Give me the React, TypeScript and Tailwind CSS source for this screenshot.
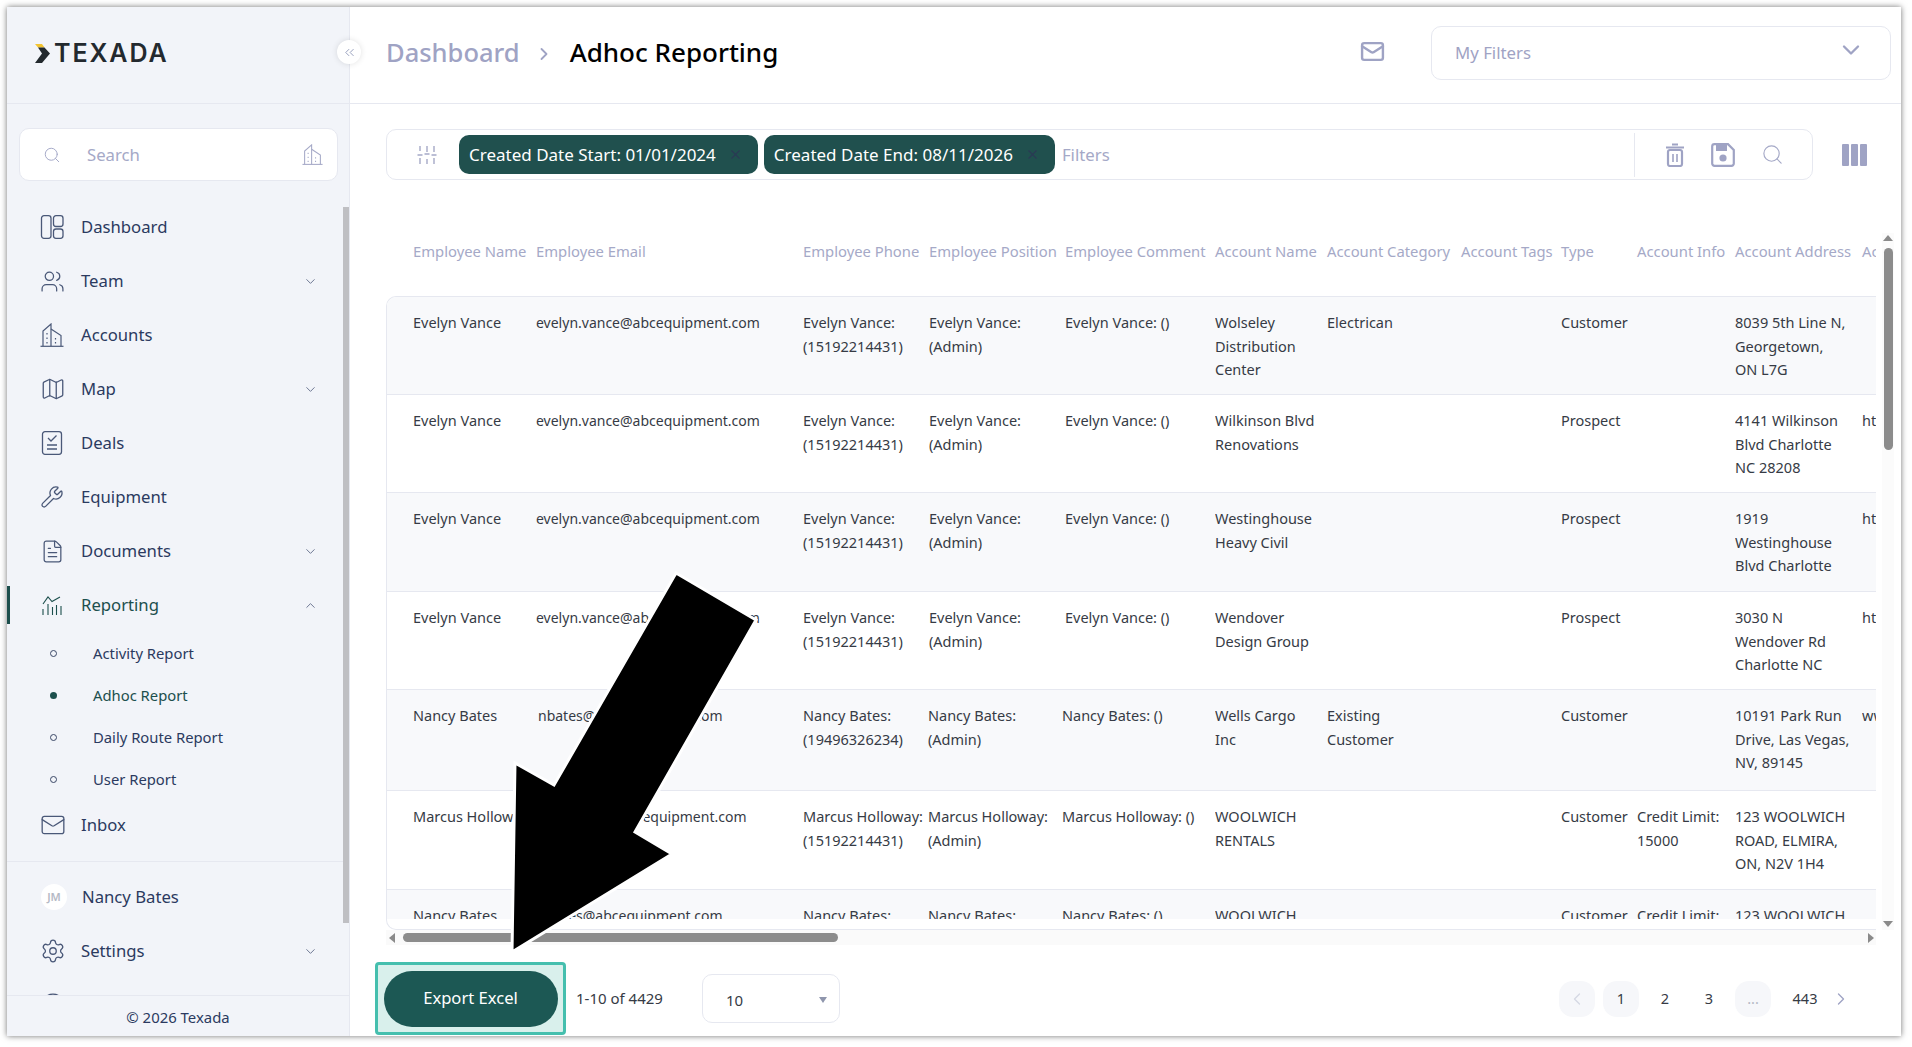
import React from "react";
import {
  ChevronDown,
  ChevronLeft,
  ChevronRight,
  ChevronUp,
  ChevronsLeft,
  CircleHelp,
  FileText,
  Mail,
  Map as MapIcon,
  Search,
  Settings,
  Users,
  Wrench,
  X,
} from "lucide-react";

const DashboardIcon = () => (
  <svg width="24" height="24" viewBox="0 0 24 24" fill="none" stroke="currentColor" strokeWidth="1.3">
    <rect x="1.5" y="0.7" width="9.5" height="22.6" rx="2.5" />
    <rect x="13.5" y="0.7" width="9.5" height="10.8" rx="2.5" />
    <rect x="13.5" y="14" width="9.5" height="9.3" rx="2.5" />
  </svg>
);

const BuildingIcon = ({ size = 24 }: { size?: number }) => (
  <svg width={size} height={size} viewBox="0 0 24 24" fill="none" stroke="currentColor" strokeWidth="1.2">
    <path d="M0.5 23.3H23.5" />
    <path d="M3 23V8L11 1V23" />
    <path d="M11 6L21 12.5V23" />
    <path d="M7 10V11.5M7 14.5V16M7 19V20.5M15.5 15V16.5M15.5 19V20.5" />
  </svg>
);

const DealsIcon = () => (
  <svg width="24" height="24" viewBox="0 0 24 24" fill="none" stroke="currentColor" strokeWidth="1.3">
    <rect x="2.5" y="0.7" width="19" height="22.6" rx="2.5" />
    <path d="M8 7L11 10L16.5 4.5M7 14H17M7 18H17" />
  </svg>
);

const ReportIcon = () => (
  <svg width="24" height="24" viewBox="0 0 24 24" fill="none" stroke="currentColor" strokeWidth="1.1">
    <path d="M3 11L8 4L12 8.5L20 4" />
    <path d="M3 16V22M8 11V22M12.5 14V22M16.5 12V22M21 13V22" />
  </svg>
);

const SlidersIcon = () => (
  <svg width="20" height="20" viewBox="0 0 20 20" fill="none" stroke="#a5a9c7" strokeWidth="1.4">
    <path d="M3 1V6M10 1V7M17 1V7M3 13V19M10 14V19M17 13V19" />
    <path d="M0.5 10H5.5M7.5 9H12.5M14.5 10H19.5" />
  </svg>
);

const TrashIcon = () => (
  <svg width="20" height="24" viewBox="0 0 20 24" fill="none" stroke="#9fa3c4" strokeWidth="2.2">
    <path d="M1 4.5H19M7 1.5H13" />
    <rect x="3" y="7" width="14" height="16" rx="2" />
    <path d="M8 11V19M12 11V19" strokeWidth="1.6" />
  </svg>
);

const SaveIcon = () => (
  <svg width="24" height="24" viewBox="0 0 24 24" fill="none" stroke="#9fa3c4" strokeWidth="2.2">
    <path d="M3.5 1.2H17L22.8 7V20.5A2.3 2.3 0 0 1 20.5 22.8H3.5A2.3 2.3 0 0 1 1.2 20.5V3.5A2.3 2.3 0 0 1 3.5 1.2Z" />
    <rect x="5" y="2" width="11" height="6" fill="#9fa3c4" stroke="none" />
    <circle cx="12" cy="15" r="3.6" fill="#9fa3c4" stroke="none" />
  </svg>
);

const LogoMark = () => (
  <svg width="16" height="19" viewBox="0 0 16 19">
    <path d="M0 0H7L9.5 3.5H3Z" fill="#f4c430" />
    <path d="M3 3.5H9.5L15 9.5L7 19H0L7 9.5Z" fill="#23292e" />
  </svg>
);

type NavItem = { label: string; icon: React.ReactNode; caret?: boolean };

const topNav: NavItem[] = [
  { label: "Dashboard", icon: <DashboardIcon /> },
  { label: "Team", icon: <Users size={25} strokeWidth={1.2} />, caret: true },
  { label: "Accounts", icon: <BuildingIcon /> },
  { label: "Map", icon: <MapIcon size={26} strokeWidth={1.2} />, caret: true },
  { label: "Deals", icon: <DealsIcon /> },
  { label: "Equipment", icon: <Wrench size={24} strokeWidth={1.3} /> },
  { label: "Documents", icon: <FileText size={25} strokeWidth={1.2} />, caret: true },
];

const subNav = ["Activity Report", "Adhoc Report", "Daily Route Report", "User Report"];

function NavRow({ item }: { item: NavItem }) {
  return (
    <div className="flex h-[54px] items-center pl-[33px] pr-[31px] text-[#2b3a60]">
      <span className="flex w-[41px] justify-start text-[#4a5878]">{item.icon}</span>
      <span className="flex-1 text-[16.7px]">{item.label}</span>
      {item.caret && <ChevronDown size={15} strokeWidth={1.4} className="text-[#5b6685]" />}
    </div>
  );
}

const gridEvelyn = "grid grid-cols-[123px_267px_126px_136px_150px_112px_134px_100px_76px_98px_127px_60px]";
const gridNancy = "grid grid-cols-[125px_265px_125px_134px_153px_112px_134px_100px_76px_98px_127px_60px]";
const gridMarcus = "grid grid-cols-[122px_268px_125px_134px_153px_112px_134px_100px_76px_98px_127px_60px]";

const headers = [
  "Employee Name",
  "Employee Email",
  "Employee Phone",
  "Employee Position",
  "Employee Comment",
  "Account Name",
  "Account Category",
  "Account Tags",
  "Type",
  "Account Info",
  "Account Address",
  "Account",
];

const evelyn = ["Evelyn Vance", "evelyn.vance@abcequipment.com", "Evelyn Vance:\n(15192214431)", "Evelyn Vance:\n(Admin)", "Evelyn Vance: ()"];
const nancy = ["Nancy Bates", "nbates@abcequipment.com", "Nancy Bates:\n(19496326234)", "Nancy Bates:\n(Admin)", "Nancy Bates: ()"];
const marcus = ["Marcus Holloway", "mholloway@abcequipment.com", "Marcus Holloway:\n(15192214431)", "Marcus Holloway:\n(Admin)", "Marcus Holloway: ()"];

const rows = [
  { grid: gridEvelyn, h: "h-[98px]", cells: [...evelyn, "Wolseley\nDistribution\nCenter", "Electrican", "", "Customer", "", "8039 5th Line N,\nGeorgetown,\nON L7G", ""] },
  { grid: gridEvelyn, h: "h-[98px]", cells: [...evelyn, "Wilkinson Blvd\nRenovations", "", "", "Prospect", "", "4141 Wilkinson\nBlvd Charlotte\nNC 28208", "https"] },
  { grid: gridEvelyn, h: "h-[99px]", cells: [...evelyn, "Westinghouse\nHeavy Civil", "", "", "Prospect", "", "1919\nWestinghouse\nBlvd Charlotte", "https"] },
  { grid: gridEvelyn, h: "h-[98px]", cells: [...evelyn, "Wendover\nDesign Group", "", "", "Prospect", "", "3030 N\nWendover Rd\nCharlotte NC", "https"] },
  { grid: gridNancy, h: "h-[101px]", cells: [...nancy, "Wells Cargo\nInc", "Existing\nCustomer", "", "Customer", "", "10191 Park Run\nDrive, Las Vegas,\nNV, 89145", "www"] },
  { grid: gridMarcus, h: "h-[99px]", cells: [...marcus, "WOOLWICH\nRENTALS", "", "", "Customer", "Credit Limit:\n15000", "123 WOOLWICH\nROAD, ELMIRA,\nON, N2V 1H4", ""] },
  { grid: gridNancy, h: "h-[98px]", cells: ["Nancy Bates", "nbates@abcequipment.com", "Nancy Bates:\n(19496326234)", "Nancy Bates:\n(Admin)", "Nancy Bates: ()", "WOOLWICH\nRENTALS", "", "", "Customer", "Credit Limit:\n15000", "123 WOOLWICH\nROAD, ELMIRA,\nON, N2V 1H4", ""] },
];

function Sidebar() {
  return (
    <aside className="relative flex h-full w-[343px] shrink-0 flex-col border-r border-[#e6e8f0] bg-[#f2f4f9]">
      <div className="flex h-[97px] shrink-0 items-start gap-[3px] border-b border-[#e6e8f0] pl-[28px] pt-[37px]">
        <LogoMark />
        <span className="font-['Inter',sans-serif] text-[25px] leading-[19px] font-semibold tracking-[1.9px] text-[#23292e]">TEXADA</span>
      </div>
      <div className="absolute left-[330px] top-[33px] z-10 flex h-[24px] w-[24px] items-center justify-center rounded-full bg-white shadow-[0_0_6px_rgba(0,0,0,0.12)]">
        <ChevronsLeft size={15} strokeWidth={1.4} className="text-[#8a93b5]" />
      </div>
      <div className="mx-[12px] mt-[24px] flex h-[53px] w-[319px] shrink-0 items-center rounded-[10px] border border-[#e6e8f0] bg-white pl-[23px] pr-[14px] text-[#a5a9c7]">
        <Search size={18} strokeWidth={1.3} />
        <span className="ml-[26px] flex-1 text-[16.7px]">Search</span>
        <BuildingIcon size={21} />
      </div>
      <div className="mt-[19px] min-h-0 flex-1 overflow-hidden">
        {topNav.map((item) => (
          <NavRow key={item.label} item={item} />
        ))}
        <div className="relative flex h-[54px] items-center pl-[33px] pr-[31px] text-[#1c4f4d]">
          <span className="absolute left-0 top-[8px] h-[38px] w-[3px] bg-[#1c4f4d]" />
          <span className="flex w-[41px]">
            <ReportIcon />
          </span>
          <span className="flex-1 text-[16.7px]">Reporting</span>
          <ChevronUp size={15} strokeWidth={1.4} className="text-[#5b6685]" />
        </div>
        {subNav.map((label) => (
          <div key={label} className="flex h-[42px] items-center pl-[43px]">
            {label === "Adhoc Report" ? (
              <span className="h-[7px] w-[7px] rounded-full bg-[#1c4f4d]" />
            ) : (
              <span className="h-[7px] w-[7px] rounded-full border-[1.5px] border-[#3a4766]" />
            )}
            <span className={label === "Adhoc Report" ? "ml-[36px] text-[14.8px] text-[#1c4f4d]" : "ml-[36px] text-[14.8px] text-[#2b3a60]"}>{label}</span>
          </div>
        ))}
        <div className="flex h-[50px] items-center pl-[33px] text-[#2b3a60]">
          <span className="flex w-[41px] text-[#4a5878]">
            <Mail size={26} strokeWidth={1.2} />
          </span>
          <span className="text-[16.7px]">Inbox</span>
        </div>
        <div className="mt-[11px] border-t border-[#e6e8f0]" />
        <div className="mt-[8px] flex h-[54px] items-center pl-[34px] text-[#2b3a60]">
          <span className="flex h-[26px] w-[26px] items-center justify-center rounded-full bg-white text-[11px] font-semibold text-[#b5b9c5]">JM</span>
          <span className="ml-[15px] text-[16.7px]">Nancy Bates</span>
        </div>
        <NavRow item={{ label: "Settings", icon: <Settings size={26} strokeWidth={1.2} />, caret: true }} />
        <NavRow item={{ label: "Help", icon: <CircleHelp size={26} strokeWidth={1.2} /> }} />
      </div>
      <div className="absolute right-0 top-[200px] h-[716px] w-[6px] bg-[#bfbfc3]" />
      <div className="relative z-10 flex h-[41px] shrink-0 items-center justify-center border-t border-[#e6e8f0] bg-[#f2f4f9] pt-[2px] text-[14.9px] text-[#2b3a60]">
        © 2026 Texada
      </div>
    </aside>
  );
}

function TopBar() {
  return (
    <header className="flex h-[97px] shrink-0 items-center border-b border-[#e6e8f0] pb-[5px] pl-[36px] pr-[10px]">
      <span className="text-[25.5px] font-medium text-[#9fa3c4]">Dashboard</span>
      <ChevronRight size={20} strokeWidth={2.2} className="ml-[14px] mr-[16px] mt-[3px] text-[#9fa3c4]" />
      <span className="text-[26px] font-medium text-black">Adhoc Reporting</span>
      <Mail size={25} strokeWidth={2.3} className="ml-auto mb-[2px] text-[#9fa3c4]" />
      <div className="ml-[46px] flex h-[54px] w-[460px] items-center justify-between rounded-[10px] border border-[#e6e8f0] pl-[23px] pr-[25px] text-[#9fa3c4]">
        <span className="text-[16.8px]">My Filters</span>
        <ChevronDown size={28} strokeWidth={2} className="mb-[5px]" />
      </div>
    </header>
  );
}

function Chip({ label }: { label: string }) {
  return (
    <div className="flex h-[39px] items-center rounded-[10px] bg-[#20504e] pl-[10px] pr-[15px] text-[17px] text-white">
      {label}
      <X size={15} strokeWidth={1.8} className="ml-[12px] text-[#2b3a55]" />
    </div>
  );
}

function FilterBar() {
  return (
    <div className="ml-[36px] mt-[25px] flex shrink-0 items-center">
      <div className="flex h-[51px] w-[1427px] items-center rounded-[10px] border border-[#e6e8f0] pl-[30px]">
        <SlidersIcon />
        <div className="ml-[22px] flex gap-[6px]">
          <Chip label="Created Date Start: 01/01/2024" />
          <Chip label="Created Date End: 08/11/2026" />
        </div>
        <span className="ml-[7px] text-[16.8px] text-[#a5a9c7]">Filters</span>
        <div className="ml-auto flex h-[44px] w-[178px] items-center gap-[26px] border-l border-[#e6e8f0] pl-[30px]">
          <TrashIcon />
          <SaveIcon />
          <Search size={23} strokeWidth={1.2} className="text-[#a5a9c7]" />
        </div>
      </div>
      <div className="ml-[29px] flex h-[22px] gap-[2px]">
        <span className="w-[7px] rounded-[1px] bg-[#9fa3c4]" />
        <span className="w-[7px] rounded-[1px] bg-[#9fa3c4]" />
        <span className="w-[7px] rounded-[1px] bg-[#9fa3c4]" />
      </div>
    </div>
  );
}

function DataTable() {
  return (
    <div className="ml-[36px] mt-[53px] flex h-[712px] w-[1509px] shrink-0">
      <div className="flex w-[1490px] flex-col">
        <div className={`${gridEvelyn} h-[63px] shrink-0 items-start overflow-hidden pl-[27px] pt-[6px] text-[14.8px] leading-[24px] text-[#a5a9c7]`}>
          {headers.map((h) => (
            <span key={h} className="whitespace-nowrap">
              {h}
            </span>
          ))}
        </div>
        <div className="h-[634px] shrink-0 overflow-hidden rounded-l-[10px] border border-r-0 border-[#e6e8f0] pb-[10px]">
          <div className="h-full overflow-hidden">
            {rows.map((row, i) => (
              <div
                key={i}
                className={`${row.grid} ${row.h} overflow-hidden border-b border-[#e6e8f0] pl-[26px] pt-[14px] text-[14.5px] leading-[23.7px] text-[#363b45] ${i % 2 === 0 ? "bg-[#f8f9fb]" : "bg-white"}`}
              >
                {row.cells.map((cell, j) => (
                  <span key={j} className={j === 1 ? "overflow-hidden whitespace-pre-line text-[14px]" : "overflow-hidden whitespace-pre-line"}>
                    {cell}
                  </span>
                ))}
              </div>
            ))}
          </div>
        </div>
        <div className="flex h-[15px] shrink-0 items-center bg-[#fafafa]">
          <span className="ml-[3px] h-0 w-0 border-y-[5px] border-r-[6px] border-y-transparent border-r-[#8a8a8a]" />
          <span className="ml-[8px] h-[9px] w-[435px] rounded-full bg-[#8c8c8c]" />
          <span className="ml-auto mr-[2px] h-0 w-0 border-y-[5px] border-l-[6px] border-y-transparent border-l-[#8a8a8a]" />
        </div>
      </div>
      <div className="ml-[6px] flex h-[697px] w-[12px] flex-col items-center bg-[#fbfbfb] pt-[2px]">
        <span className="h-0 w-0 border-x-[5px] border-b-[6px] border-x-transparent border-b-[#8a8a8a]" />
        <span className="mt-[7px] h-[202px] w-[9px] rounded-full bg-[#8c8c8c]" />
        <span className="mb-[3px] mt-auto h-0 w-0 border-x-[5px] border-t-[6px] border-x-transparent border-t-[#8a8a8a]" />
      </div>
    </div>
  );
}

function PageBtn({ label, shaded }: { label: React.ReactNode; shaded?: boolean }) {
  return (
    <span className={`flex h-[36px] w-[36px] items-center justify-center rounded-[14px] text-[14.5px] text-[#363b45] ${shaded ? "bg-[#f6f7fa]" : ""}`}>
      {label}
    </span>
  );
}

function FooterBar() {
  return (
    <div className="mt-[17px] flex shrink-0 items-center pl-[25px] pr-[50px]">
      <div className="flex h-[73px] w-[191px] items-center justify-center rounded-[4px] border-[3px] border-[#45bfae] bg-[#d9f0ec]">
        <button className="h-[56px] w-[174px] rounded-full bg-[#1c5854] text-[16.6px] text-white">Export Excel</button>
      </div>
      <span className="ml-[10px] text-[15px] text-[#363b45]">1-10 of 4429</span>
      <div className="relative ml-[39px] flex h-[49px] w-[138px] items-center rounded-[10px] border border-[#e6e8f0] pl-[23px] pt-[3px] text-[15px] text-[#363b45]">
        10
        <span className="absolute right-[12px] top-[22px] h-0 w-0 border-x-[4px] border-t-[6px] border-x-transparent border-t-[#8f96ad]" />
      </div>
      <div className="ml-auto flex items-center gap-[8px]">
        <PageBtn shaded label={<ChevronLeft size={20} strokeWidth={1.5} className="text-[#d5d8e3]" />} />
        <PageBtn shaded label="1" />
        <PageBtn label="2" />
        <PageBtn label="3" />
        <PageBtn shaded label={<span className="text-[#b5b9c5]">...</span>} />
        <span className="ml-[8px]">
          <PageBtn label="443" />
        </span>
        <ChevronRight size={20} strokeWidth={1.6} className="text-[#9fa3c4]" />
      </div>
    </div>
  );
}

export default function App() {
  return (
    <div className="relative h-[1047px] w-[1912px] overflow-hidden bg-white pl-[7px] pt-[7px] font-['Noto_Sans',sans-serif]">
      <div className="flex h-[1029px] w-[1894px] bg-white shadow-[0_0_6px_rgba(0,0,0,0.55)]">
        <Sidebar />
        <main className="flex min-w-0 flex-1 flex-col">
          <TopBar />
          <FilterBar />
          <DataTable />
          <FooterBar />
        </main>
      </div>
      {/* arrow callout drawn over the page */}
      <svg className="pointer-events-none absolute left-0 top-0" width="1912" height="1047">
        <polygon points="676,573 756,620 635,832 672,854 512,952 515,763 554,785" fill="#000" stroke="#fff" strokeWidth="3" />
      </svg>
    </div>
  );
}
